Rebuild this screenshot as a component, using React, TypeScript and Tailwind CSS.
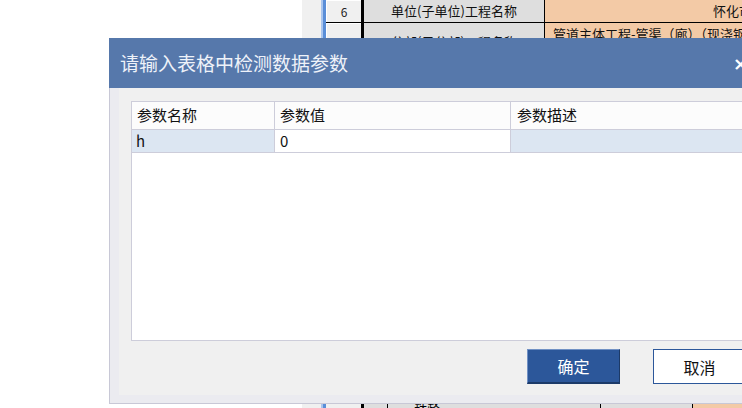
import React from 'react';

const cjk = { fontFamily: '"Noto Sans CJK SC", "Liberation Sans", sans-serif' };

const SheetRow = ({ num, label, value, h, valueTop }: { num: string; label: string; value: string; h: string; valueTop?: boolean }) => (
    <div className={`flex ${h} border-b border-black`}>
        <div className="w-[35px] shrink-0 bg-[#f0f0f0] border-t border-l border-white flex items-center justify-center text-[12px] text-[#222]">{num}</div>
        <div className="w-[3px] shrink-0 bg-black" />
        <div className="w-[180px] shrink-0 bg-[#dedede] flex items-center justify-center text-[13px] text-[#111] whitespace-nowrap">{label}</div>
        <div className="w-px shrink-0 bg-black" />
        <div className={`flex-1 bg-[#f3caa6] text-[13px] text-[#111] whitespace-nowrap overflow-hidden flex ${valueTop ? 'items-start pl-[8px] pt-[1px]' : 'items-center pl-[168px]'}`}>{value}</div>
    </div>
);

const App = () => {
    return (
        <div className="relative w-[742px] h-[408px] overflow-hidden bg-white" style={cjk}>
            {/* spreadsheet behind the dialog */}
            <div className="flex h-full">
                <div className="w-[302px] shrink-0 bg-white" />
                <div className="w-[19px] shrink-0 bg-[#f0f0f0]" />
                <div className="w-[2px] shrink-0 bg-[#a9c5ee]" />
                <div className="w-[3px] shrink-0 bg-[#5a8ed8]" />
                <div className="flex-1 flex flex-col">
                    <SheetRow num="6" label="单位(子单位)工程名称" value="怀化市" h="h-[23px]" />
                    <SheetRow num="7" label="分部(子分部)工程名称" value="管道主体工程-管渠（廊）（现浇钢筋混凝土管渠）" h="h-[38px]" valueTop />
                    <div className="flex-1 bg-[#dedede]" />
                    <div className="flex h-[12px] bg-[#dedede]">
                        <div className="w-[35px] shrink-0 bg-[#f0f0f0]" />
                        <div className="w-[3px] shrink-0 bg-black" />
                        <div className="w-[24px] shrink-0 border-r border-black" />
                        <div className="w-[213px] shrink-0 border-r border-black text-[13px] leading-[12px] pl-[26px] pt-[4px]">铁路</div>
                        <div className="w-[92px] shrink-0 border-r border-black" />
                        <div className="flex-1 bg-[#f3caa6]" />
                    </div>
                </div>
            </div>

            {/* dialog */}
            <div className="absolute left-[109px] top-[38px] w-[654px] h-[366px] flex flex-col">
                <div className="h-[50px] bg-[#5678ab] flex items-center justify-between pl-[11px] pr-[15px]">
                    <span className="text-[19px] text-[#eef2f9]">请输入表格中检测数据参数</span>
                    <span className="text-[18px] font-bold text-white" style={{ fontFamily: '"DejaVu Sans", sans-serif' }}>×</span>
                </div>
                <div className="flex-1 border-l border-b border-[#c8c8d6] bg-[#ebebf0] pl-[9px] pb-[8px]">
                    <div className="h-full bg-[#f0f0f0] pl-[12px] pt-[13px] flex flex-col">
                        <div className="h-[240px] border border-[#cdcdda] bg-white flex flex-col">
                            <div className="flex h-[28px] bg-[#fcfcfc] border-b border-[#cdcdda] text-[15px] text-[#111]">
                                <div className="w-[143px] border-r border-[#cdcdda] flex items-center pl-[5px]">参数名称</div>
                                <div className="w-[236px] border-r border-[#cdcdda] flex items-center pl-[5px]">参数值</div>
                                <div className="flex-1 flex items-center pl-[6px]">参数描述</div>
                            </div>
                            <div className="flex h-[23px] border-b border-[#cdcdda] text-[15px] text-[#111]">
                                <div className="w-[143px] bg-[#dce6f2] border-r border-[#cdcdda] flex items-center pl-[4px]">h</div>
                                <div className="w-[236px] bg-white border-r border-[#cdcdda] flex items-center pl-[5px]">0</div>
                                <div className="flex-1 bg-[#dce6f2]" />
                            </div>
                        </div>
                        <div className="flex gap-[33px] mt-[8px] pl-[396px]">
                            <button className="w-[93px] h-[35px] bg-[#2c579a] border border-t-[#7191c4] border-l-[#7191c4] border-r-[#1c3a68] border-b-[#1c3a68] border-b-2 text-[16px] text-white">确定</button>
                            <button className="w-[93px] h-[35px] bg-white border border-[#2c579a] text-[16px] text-[#111]">取消</button>
                        </div>
                    </div>
                </div>
            </div>
        </div>
    );
};

export default App;
